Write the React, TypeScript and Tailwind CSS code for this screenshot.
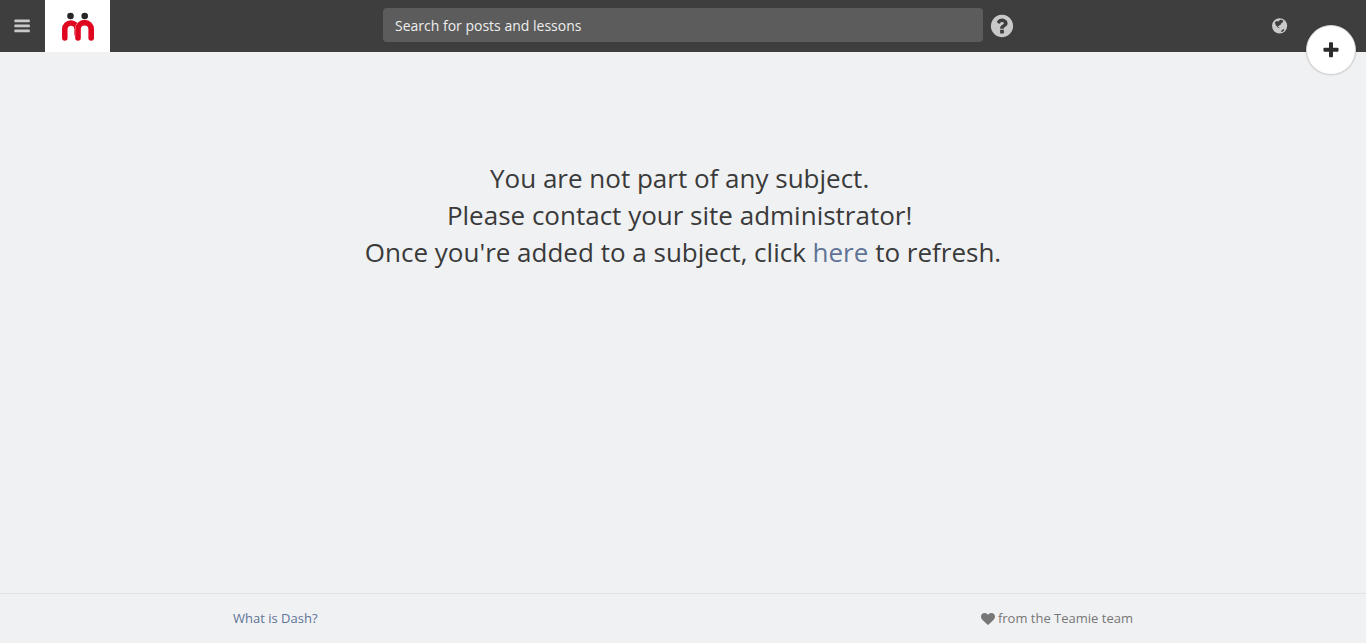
import type { ReactNode } from "react";

type IconProps = {
  className?: string;
  children: ReactNode;
};

function Icon({ className, children }: IconProps) {
  return (
    <svg viewBox="0 0 1792 1792" fill="currentColor" aria-hidden="true" className={className}>
      {children}
    </svg>
  );
}

function BarsIcon() {
  return (
    <svg viewBox="0 0 16 14" fill="currentColor" aria-hidden="true" className="h-3.5 w-4">
      <rect x="0.4" y="0.6" width="15.4" height="2.7" rx="0.6" />
      <rect x="0.4" y="5.6" width="15.4" height="2.7" rx="0.6" />
      <rect x="0.4" y="10.6" width="15.4" height="2.7" rx="0.6" />
    </svg>
  );
}

function Logo() {
  return (
    <svg viewBox="0 0 32 30" aria-hidden="true" className="h-[30px] w-8">
      <circle cx="8.5" cy="5" r="3.3" fill="#262626" />
      <circle cx="22.7" cy="5" r="3.3" fill="#262626" />
      <g fill="none" strokeLinecap="round">
        <path d="M2.8 27V18a6.1 6.1 0 0 1 12.2 0v5" stroke="#e1061f" strokeWidth="5.5" />
        <path d="M16 27V18.2a6.6 6.6 0 0 1 13.2 0V27" stroke="#fff" strokeWidth="6.4" />
        <path d="M16 27V18.2a6.6 6.6 0 0 1 13.2 0V27" stroke="#e1061f" strokeWidth="5.6" />
      </g>
    </svg>
  );
}

function GlobeIcon() {
  return (
    <svg viewBox="0 0 16 16" aria-hidden="true" className="size-4">
      <circle cx="7.6" cy="7.8" r="7.6" fill="#c9c9c9" />
      <path
        d="M3 4.2 4.6 3 6 3.4 7.4 2.6 8.8 1.4 11.2 2.4 10.8 4.4 9.4 5 8.8 6.4 7.4 7.2 6.8 8.2 5.8 7.8 6 9 7.4 9.4 7.4 10.2 5.6 9.2 4 7.6 3.2 5.8Z"
        fill="#3e3e3e"
      />
      <path d="M9.6 12.2 11.8 11 12.4 12.2 10.6 13.8 9 14Z" fill="#3e3e3e" />
    </svg>
  );
}

function TopBar() {
  return (
    <header className="relative grid h-13 grid-cols-[1fr_minmax(0,600px)_1fr] items-center bg-[#3e3e3e]">
      <div className="flex self-stretch">
        <button
          type="button"
          aria-label="Menu"
          className="flex w-11 items-center justify-center text-[#c9c9c9]"
        >
          <BarsIcon />
        </button>
        <a
          href="#"
          aria-label="Home"
          className="ml-px flex w-[65px] items-center justify-center bg-white"
        >
          <Logo />
        </a>
      </div>

      <input
        type="search"
        aria-label="Search for posts and lessons"
        placeholder="Search for posts and lessons"
        className="mb-0.5 h-[34px] w-full rounded-sm bg-[#5c5c5c] px-3 text-sm text-[#eee] outline-none placeholder:text-[#eee]"
      />

      <div className="flex items-center justify-between pr-[78px] pl-1.5 text-[#c9c9c9]">
        <button type="button" aria-label="Help">
          <Icon className="size-[26px]">
            <path d="M1024 1376v-192q0-14-9-23t-23-9h-192q-14 0-23 9t-9 23v192q0 14 9 23t23 9h192q14 0 23-9t9-23zm256-672q0-88-55.5-163t-138.5-116-170-41q-243 0-371 213-15 24 8 42l132 100q7 6 19 6 16 0 25-12 53-68 86-92 34-24 86-24 48 0 85.5 26t37.5 59q0 38-20 61t-68 45q-63 28-115.5 86.5t-52.5 125.5v36q0 14 9 23t23 9h192q14 0 23-9t9-23q0-19 21.5-49.5t54.5-49.5q32-18 49-28.5t46-35 44.5-48 28-60.5 12.5-81zm384 192q0 209-103 385.5t-279.5 279.5-385.5 103-385.5-103-279.5-279.5-103-385.5 103-385.5 279.5-279.5 385.5-103 385.5 103 279.5 279.5 103 385.5z" />
          </Icon>
        </button>
        <button type="button" aria-label="Language">
          <GlobeIcon />
        </button>
      </div>

      <button
        type="button"
        aria-label="Create"
        className="absolute top-[25px] right-2.5 flex size-[50px] items-center justify-center rounded-full border border-[#d4d4d4] bg-white text-[#2c2c2c] shadow-[0_0_2px_rgba(0,0,0,0.2)]"
      >
        <svg viewBox="0 0 16 16" fill="currentColor" aria-hidden="true" className="size-4">
          <rect x="6" y="0.2" width="4" height="15" rx="0.9" />
          <rect x="0.5" y="5.7" width="15" height="4" rx="0.9" />
        </svg>
      </button>
    </header>
  );
}

export default function App() {
  return (
    <div className="flex min-h-screen flex-col bg-[#f0f1f3] font-['Open_Sans',sans-serif]">
      <TopBar />

      <main className="flex-1 px-4 pt-27">
        <p className="text-center text-[26px] leading-[37px] text-[#3a3a3a]">
          You are not part of any subject.&nbsp;
          <br />
          Please contact your site administrator!&nbsp;
          <br />
          Once you're added to a subject, click{" "}
          <a href="#" className="text-[#5f7396]">
            here
          </a>{" "}
          to refresh.
        </p>
      </main>

      <footer className="border-t border-[#e3e4e6] text-[13px]">
        <div className="mx-auto flex h-[49px] max-w-[900px] items-center justify-between">
          <a href="#" className="text-[#5f7396]">
            What is Dash?
          </a>
          <span className="flex items-center gap-[3px] text-[#777]">
            <Icon className="size-3.5">
              <path d="M896 1664q-26 0-44-18l-624-602q-10-8-27.5-26t-55.5-65.5-68-97.5-53.5-121-23.5-138q0-220 127-344t351-124q62 0 126.5 21.5t120 58 95.5 68.5 76 68q36-36 76-68t95.5-68.5 120-58 126.5-21.5q224 0 351 124t127 344q0 221-229 450l-623 600q-18 18-44 18z" />
            </Icon>
            from the Teamie team
          </span>
        </div>
      </footer>
    </div>
  );
}
